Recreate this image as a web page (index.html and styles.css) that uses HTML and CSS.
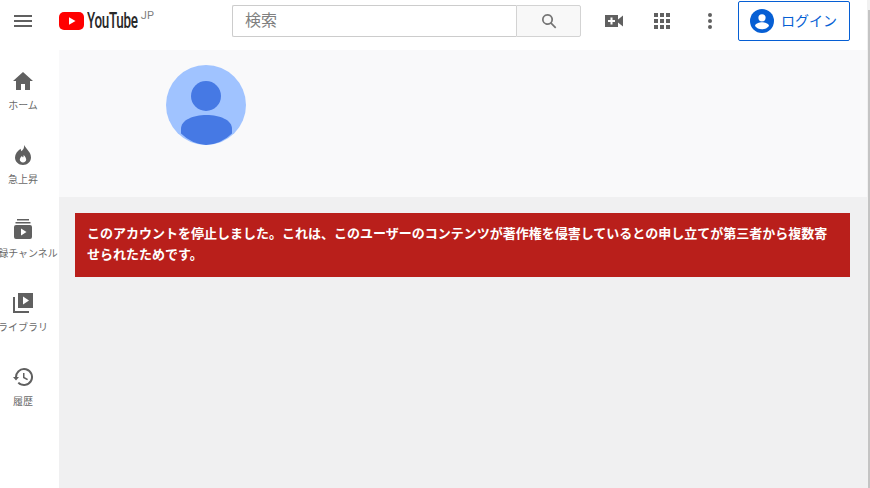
FILE: index.html
```html
<!DOCTYPE html>
<html lang="ja">
<head>
  <meta charset="UTF-8" />
  <title>YouTube</title>
  <link rel="stylesheet" href="styles.css">
</head>
<body>
  <header class="topbar">
    <button class="menu-btn" aria-label="menu">
      <svg viewBox="0 0 18 12" width="18" height="12"><path d="M0 0h18v2H0zM0 5h18v2H0zM0 10h18v2H0z"/></svg>
    </button>
    <div class="logo">
      <svg class="logo-icon" viewBox="0 0 25 18" width="25" height="18">
        <rect width="25" height="18" rx="5" fill="#f00"/>
        <path d="M10 5.200v7.600l6.500-3.800z" fill="#fff"/>
      </svg>
      <span class="logo-text">YouTube</span>
      <span class="logo-country">JP</span>
    </div>
    <div class="search">
      <div class="search-input">検索</div>
      <div class="search-btn">
        <svg viewBox="0 0 16 16" width="16" height="16"><path d="M6.500 1a5.500 5.500 0 0 1 4.400 8.800l4.400 4.400-1.200 1.200-4.400-4.400A5.500 5.500 0 1 1 6.500 1zm0 1.700a3.800 3.800 0 1 0 0 7.600 3.800 3.800 0 0 0 0-7.600z"/></svg>
      </div>
    </div>
    <div class="actions">
      <svg class="icon-video" viewBox="0 0 18 14" width="18" height="14"><path d="M0 1h13v4.500L18 1.500v11L13 8.500V13H0z"/><path d="M5.500 3.500h2V6H10v2H7.500v2.500h-2V8H3V6h2.500z" fill="#fff"/></svg>
      <svg class="icon-apps" viewBox="0 0 16 16" width="16" height="16"><path d="M0 0h4v4H0zM6 0h4v4H6zM12 0h4v4h-4zM0 6h4v4H0zM6 6h4v4H6zM12 6h4v4h-4zM0 12h4v4H0zM6 12h4v4H6zM12 12h4v4h-4z"/></svg>
      <svg class="icon-dots" viewBox="0 0 4 16" width="4" height="16"><circle cx="2" cy="2" r="2"/><circle cx="2" cy="8" r="2"/><circle cx="2" cy="14" r="2"/></svg>
      <a class="login-btn" href="#">
        <svg viewBox="0 0 24 24" width="24" height="24"><circle cx="12" cy="12" r="12" fill="#065fd4"/><circle cx="12" cy="8.800" r="3.600" fill="#fff"/><path d="M5 17c0-2.600 4.500-3.800 7-3.800s7 1.200 7 3.800c-1.500 2-4 3.300-7 3.300s-5.500-1.300-7-3.300z" fill="#fff"/></svg>
        <span>ログイン</span>
      </a>
    </div>
  </header>

  <div class="page">
    <nav class="sidebar">
      <a class="nav-item" href="#">
        <svg viewBox="0 0 20 18" width="20" height="18"><path d="M8 18v-6h4v6h5V9h3L10 0 0 9h3v9z"/></svg>
        <span>ホーム</span>
      </a>
      <a class="nav-item" href="#">
        <svg viewBox="0 0 16 20" width="16" height="20"><path d="M9 0c.6 3-1 4.600-2.500 6.300-.5-.8-.8-1.500-.9-2.500C2.600 6 0 9 0 12.500 0 16.600 3.600 20 8 20s8-3.400 8-7.500C16 7 11.500 4.500 9 0zM8 17.500c-1.800 0-3.200-1.300-3.200-2.900 0-1.500 1-2.500 2.200-3.700.3 1 .8 1.400 1.300 1.300.4-.7.300-1.500.3-2.200 1.500 1.300 2.600 3 2.600 4.600 0 1.600-1.400 2.900-3.200 2.900z"/></svg>
        <span>急上昇</span>
      </a>
      <a class="nav-item" href="#">
        <svg viewBox="0 0 18 20" width="18" height="20"><path d="M3 0h12v1.500H3zM1.500 3h15v1.500h-15zM2 6h14a2 2 0 0 1 2 2v10a2 2 0 0 1-2 2H2a2 2 0 0 1-2-2V8a2 2 0 0 1 2-2z"/><path d="M7 9.500v7l5.500-3.500z" fill="#fff"/></svg>
        <span>登録チャンネル</span>
      </a>
      <a class="nav-item" href="#">
        <svg viewBox="0 0 20 20" width="20" height="20"><path d="M0 4h2v14h14v2H0z"/><path d="M5 0h15v15H5z"/><path d="M10 3.500v8l6-4z" fill="#fff"/></svg>
        <span>ライブラリ</span>
      </a>
      <a class="nav-item" href="#">
        <svg viewBox="0 0 20 18" width="20" height="18"><path d="M11 0a9 9 0 0 0-9 9H0l3 3.500L6 9H4a7 7 0 1 1 2 4.900l-1.400 1.400A9 9 0 1 0 11 0z"/><path d="M10 5h1.500v4l3.500 2-.8 1.300L10 10z"/></svg>
        <span>履歴</span>
      </a>
    </nav>

    <main class="content">
      <section class="channel-head">
        <svg class="channel-avatar" viewBox="0 0 80 80" width="80" height="80">
          <circle cx="40" cy="40" r="40" fill="#a0c3ff"/>
          <circle cx="40" cy="31" r="15" fill="#4679e4"/>
          <path d="M15 64c0-9 12-14 25.500-14S66 55 66 64v4.500A40 40 0 0 1 40 80a40 40 0 0 1-25-11.500z" fill="#4679e4"/>
        </svg>
      </section>
      <section class="channel-body">
        <div class="alert">このアカウントを停止しました。これは、このユーザーのコンテンツが著作権を侵害しているとの申し立てが第三者から複数寄せられたためです。</div>
      </section>
    </main>
  </div>

  <div class="scrollbar"><div class="scrollbar-thumb"></div></div>
</body>
</html>
```

FILE: styles.css
```css
* {
  box-sizing: border-box;
}

html, body {
  height: 100%;
}

body {
  margin: 0;
  display: flex;
  flex-direction: column;
  overflow: hidden;
  background-color: #fff;
  font-family: 'Noto Sans CJK JP', 'Noto Sans', sans-serif;
}

a {
  text-decoration: none;
}

/* Barra de rolagem por cima da pagina */
.scrollbar {
  position: fixed;
  top: 0;
  right: 0;
  bottom: 0;
  width: 3px;
  padding: 10px 0 0 1px;
  background-color: #f1f1f1;
}

.scrollbar-thumb {
  height: 100%;
  background-color: #c4c4c4;
}

/* Header */
.topbar {
  display: flex;
  align-items: flex-start;
  height: 50px;
  flex-shrink: 0;
  background-color: #fff;
}

.menu-btn {
  width: 18px;
  height: 12px;
  margin: 15px 0 0 14px;
  padding: 0;
  border: none;
  background: none;
}

.menu-btn svg {
  display: block;
  fill: #606060;
}

.logo {
  display: flex;
  align-items: flex-start;
  width: 173px;
  margin: 12px 0 0 27px;
}

.logo-icon {
  display: block;
  flex-shrink: 0;
}

.logo-text {
  margin: -1px 0 0 3px;
  color: #282828;
  font-family: 'Roboto', sans-serif;
  font-size: 22px;
  font-weight: 500;
  line-height: 20px;
  letter-spacing: -0.5px;
  white-space: nowrap;
  transform: scaleX(0.61);
  transform-origin: left top;
}

.logo-country {
  margin: -2px 0 0 -29px;
  color: #808080;
  font-family: 'Roboto', sans-serif;
  font-size: 11px;
  line-height: 12px;
}

.search {
  display: flex;
  width: 349px;
  height: 32px;
  margin-top: 5px;
}

.search-input {
  flex: 1;
  padding: 0 12px;
  border: 1px solid #ccc;
  border-right: none;
  border-radius: 2px 0 0 2px;
  color: #808080;
  font-size: 16px;
  line-height: 26px;
}

.search-btn {
  display: flex;
  align-items: center;
  justify-content: center;
  width: 65px;
  border: 1px solid #d3d3d3;
  border-radius: 0 2px 2px 0;
  background-color: #f8f8f8;
}

.search-btn svg {
  fill: #757575;
}

.actions {
  display: flex;
  align-items: center;
  height: 40px;
  margin: 1px 0 0 24px;
}

.actions svg {
  display: block;
  flex-shrink: 0;
  fill: #606060;
}

.icon-apps {
  margin-left: 31px;
}

.icon-dots {
  margin-left: 38px;
}

.login-btn {
  display: flex;
  align-items: center;
  gap: 7px;
  width: 112px;
  height: 40px;
  margin-left: 26px;
  padding-left: 11px;
  border: 1px solid #065fd4;
  border-radius: 2px;
  color: #065fd4;
  font-size: 14px;
}

.login-btn span {
  line-height: 18px;
  margin-top: -2px;
}

/* Sidebar */
.page {
  display: flex;
  flex: 1;
  min-height: 0;
}

.sidebar {
  display: flex;
  flex-direction: column;
  width: 59px;
  flex-shrink: 0;
  padding-top: 21px;
  overflow: hidden;
  background-color: #fff;
}

.nav-item {
  display: flex;
  flex-direction: column;
  align-items: center;
  width: 46px;
  height: 74px;
  color: #6a6a6a;
  font-size: 10px;
  white-space: nowrap;
}

.nav-item svg {
  flex-shrink: 0;
  height: 20px;
  fill: #606060;
}

.nav-item span {
  margin-top: 6px;
  line-height: 16px;
}

/* Channel */
.content {
  display: flex;
  flex-direction: column;
  flex: 1;
  min-width: 0;
}

.channel-head {
  height: 147px;
  padding: 15px 0 0 107px;
  background-color: #f9f9fa;
}

.channel-avatar {
  display: block;
}

.channel-body {
  flex: 1;
  padding: 16px 20px 0 16px;
  background-color: #f0f0f1;
}

.alert {
  padding: 9px 12px 13px;
  background-color: #b91f1b;
  color: #fff;
  font-size: 13px;
  font-weight: 700;
  line-height: 21px;
}
```
